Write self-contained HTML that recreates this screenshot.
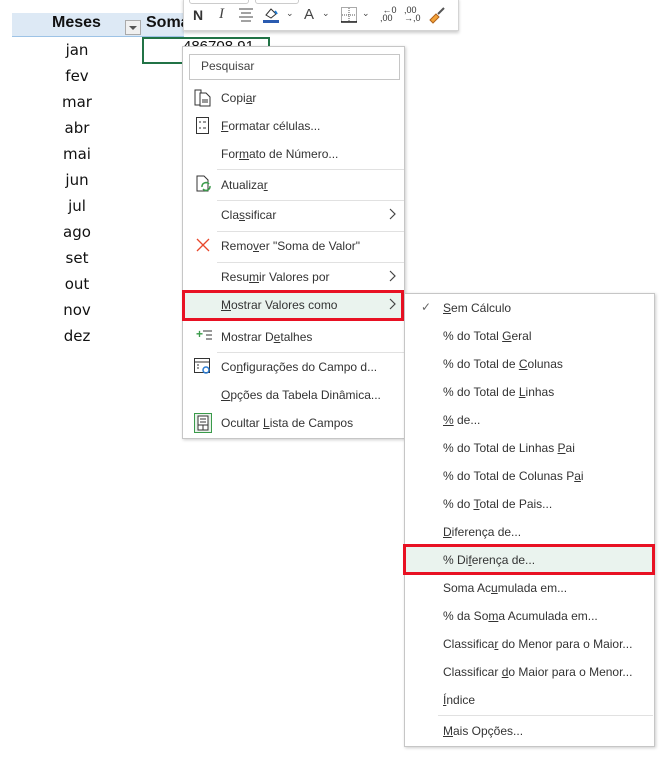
<!DOCTYPE html>
<html><head><meta charset="utf-8"><style>
*{margin:0;padding:0;box-sizing:border-box}
body{width:671px;height:767px;background:#fff;position:relative;overflow:hidden;font-family:"Liberation Sans",sans-serif}
.a{position:absolute}
.m{position:absolute;left:12px;width:130px;text-align:center;color:#111;font-family:"DejaVu Sans",sans-serif;font-size:15px}
.mi{position:absolute;font-size:12px;color:#333;white-space:nowrap;line-height:14px}
.sep{position:absolute;height:1px;background:#e1e1e1}
.chev{position:absolute}
u{text-decoration:underline}
</style></head><body>
<div class="a" style="left:12px;top:13px;width:172px;height:24px;background:#dde9f5;border-bottom:1px solid #9dc3e6"></div>
<div class="a" style="left:52px;top:14px;font-size:16px;font-weight:bold;color:#111">Meses</div>
<div class="a" style="left:125px;top:20px;width:16px;height:15px;border:1px solid #aaa;background:#f0f0f0"></div>
<div class="a" style="left:129px;top:26px;width:0;height:0;border-left:4px solid transparent;border-right:4px solid transparent;border-top:4px solid #555"></div>
<div class="a" style="left:146px;top:14px;font-size:16px;font-weight:bold;color:#111">Soma</div>
<div class="a" style="left:142px;top:37px;width:128px;height:27px;border:2px solid #217346"></div>
<div class="a" style="left:183px;top:38px;font-size:15px;color:#111">486708,91</div>
<div class="m" style="top:41px">jan</div>
<div class="m" style="top:67px">fev</div>
<div class="m" style="top:93px">mar</div>
<div class="m" style="top:119px">abr</div>
<div class="m" style="top:145px">mai</div>
<div class="m" style="top:171px">jun</div>
<div class="m" style="top:197px">jul</div>
<div class="m" style="top:223px">ago</div>
<div class="m" style="top:249px">set</div>
<div class="m" style="top:275px">out</div>
<div class="m" style="top:301px">nov</div>
<div class="m" style="top:327px">dez</div>
<div class="a" style="left:183px;top:-2px;width:276px;height:33px;background:#fff;border:1px solid #d4d4d4;box-shadow:0 2px 3px rgba(0,0,0,.2)"></div>
<div class="a" style="left:189px;top:-6px;width:60px;height:10px;border:1px solid #ccc;border-radius:3px"></div>
<div class="a" style="left:255px;top:-6px;width:44px;height:10px;border:1px solid #ccc;border-radius:3px"></div>
<div class="a" style="left:193px;top:7px;font-size:14px;font-weight:bold;color:#333">N</div>
<div class="a" style="left:219px;top:6px;font-size:15px;font-style:italic;font-family:'Liberation Serif',serif;color:#444">I</div>
<svg class="a" style="left:238px;top:8px" width="16" height="14"><path d="M1 1h14M3 5h10M1 9h14M3 13h10" stroke="#444" stroke-width="1"/></svg>
<svg class="a" style="left:262px;top:6px" width="18" height="18"><path d="M4 9l5-6 5 5-5 4z" fill="none" stroke="#333"/><path d="M13 5l2 3" stroke="#1e7ad0" stroke-width="2"/><rect x="1" y="14" width="16" height="3" fill="#2a5bb0"/></svg>
<div class="a" style="left:286px;top:8px;font-size:9px;color:#444">⌄</div>
<div class="a" style="left:304px;top:6px;font-size:15px;color:#444">A</div>
<div class="a" style="left:322px;top:8px;font-size:9px;color:#444">⌄</div>
<svg class="a" style="left:341px;top:7px" width="16" height="16"><rect x="0.5" y="0.5" width="15" height="14" fill="none" stroke="#555" stroke-dasharray="1 1"/><path d="M8 1v14M1 8h14" stroke="#555" stroke-dasharray="1 1"/><path d="M0 15h16" stroke="#222" stroke-width="1.5"/></svg>
<div class="a" style="left:362px;top:8px;font-size:9px;color:#444">⌄</div>
<div class="a" style="left:380px;top:6px;font-size:9px;line-height:8px;color:#333">&nbsp;←0<br>,00</div>
<div class="a" style="left:404px;top:6px;font-size:9px;line-height:8px;color:#333">,00<br>→,0</div>
<svg class="a" style="left:428px;top:6px" width="18" height="18"><path d="M2 14l6-6 3 3-6 6z" fill="#f3a33a" stroke="#b0621a"/><path d="M10 8l6-6" stroke="#555" stroke-width="2"/></svg>
<div class="a" style="left:182px;top:46px;width:223px;height:393px;background:#fff;border:1px solid #c6c6c6;box-shadow:1px 1px 3px rgba(0,0,0,.2)"></div>
<div class="a" style="left:189px;top:54px;width:211px;height:26px;border:1px solid #c6c6c6"></div>
<div class="mi" style="left:201px;top:59px;color:#444">Pesquisar</div>
<svg class="a" style="left:194px;top:89px" width="18" height="18"><path d="M1 1h6l0 15H1z" fill="none" stroke="#333"/><path d="M6 4h6l4 4v9H6z" fill="#fff" stroke="#333"/><path d="M8 11h6M8 13h6" stroke="#333"/></svg>
<div class="mi" style="left:221px;top:91px">Copi<u>a</u>r</div>
<svg class="a" style="left:196px;top:117px" width="14" height="18"><rect x="0.5" y="0.5" width="12" height="16" fill="none" stroke="#333"/><path d="M3 5h2M3 11h2M7 5h3M7 11h3" stroke="#333"/></svg>
<div class="mi" style="left:221px;top:119px"><u>F</u>ormatar células...</div>
<div class="mi" style="left:221px;top:147px">For<u>m</u>ato de Número...</div>
<div class="sep" style="left:217px;top:169px;width:187px"></div>
<svg class="a" style="left:196px;top:175px" width="16" height="18"><path d="M1 1h7l4 4v11H1z" fill="none" stroke="#333"/><path d="M6 12a4 4 0 0 1 7-3M14 11a4 4 0 0 1-7 3" fill="none" stroke="#3a9a4a" stroke-width="1.5"/></svg>
<div class="mi" style="left:221px;top:178px">Atualiza<u>r</u></div>
<div class="sep" style="left:217px;top:200px;width:187px"></div>
<div class="mi" style="left:221px;top:208px">Cla<u>s</u>sificar</div>
<svg class="chev" style="left:389px;top:208px" width="8" height="12"><path d="M1 1l5 5-5 5" fill="none" stroke="#444" stroke-width="1.2"/></svg>
<div class="sep" style="left:217px;top:231px;width:187px"></div>
<svg class="a" style="left:196px;top:238px" width="14" height="14"><path d="M1 1l12 12M13 1L1 13" stroke="#e8482c" stroke-width="1.3"/></svg>
<div class="mi" style="left:221px;top:239px">Remo<u>v</u>er "Soma de Valor"</div>
<div class="sep" style="left:217px;top:262px;width:187px"></div>
<div class="mi" style="left:221px;top:270px">Resu<u>m</u>ir Valores por</div>
<svg class="chev" style="left:389px;top:270px" width="8" height="12"><path d="M1 1l5 5-5 5" fill="none" stroke="#444" stroke-width="1.2"/></svg>
<div class="a" style="left:182px;top:290px;width:222px;height:31px;background:#eaf3ee;border:3px solid #e81123"></div>
<div class="mi" style="left:221px;top:298px"><u>M</u>ostrar Valores como</div>
<svg class="chev" style="left:389px;top:298px" width="8" height="12"><path d="M1 1l5 5-5 5" fill="none" stroke="#444" stroke-width="1.2"/></svg>
<div class="a" style="left:196px;top:327px;font-size:12px;color:#3a9a4a;font-weight:bold">+</div>
<svg class="a" style="left:203px;top:330px" width="10" height="12"><path d="M0 1h9M3 5h6M3 9h6" stroke="#333"/></svg>
<div class="mi" style="left:221px;top:330px">Mostrar D<u>e</u>talhes</div>
<div class="sep" style="left:217px;top:352px;width:187px"></div>
<svg class="a" style="left:194px;top:358px" width="18" height="18"><rect x="0.5" y="0.5" width="15" height="14" fill="none" stroke="#333"/><path d="M1 4h15M3 7h2M3 10h2" stroke="#333"/><circle cx="12" cy="12" r="3" fill="none" stroke="#2b7cd3" stroke-width="1.5"/></svg>
<div class="mi" style="left:221px;top:360px">Co<u>n</u>figurações do Campo d...</div>
<div class="mi" style="left:221px;top:388px"><u>O</u>pções da Tabela Dinâmica...</div>
<svg class="a" style="left:194px;top:413px" width="18" height="20"><rect x="0.5" y="0.5" width="17" height="19" fill="#e8f2ea" stroke="#3a9a4a"/><rect x="4" y="3" width="10" height="14" fill="#fff" stroke="#333"/><path d="M6 6h6M6 9h6M4 12h10M9 12v5" stroke="#333"/></svg>
<div class="mi" style="left:221px;top:416px">Ocultar <u>L</u>ista de Campos</div>
<div class="a" style="left:404px;top:293px;width:251px;height:454px;background:#fff;border:1px solid #c6c6c6;box-shadow:1px 1px 3px rgba(0,0,0,.2)"></div>
<div class="a" style="left:421px;top:300px;font-size:12px;color:#666">✓</div>
<div class="mi" style="left:443px;top:301px"><u>S</u>em Cálculo</div>
<div class="mi" style="left:443px;top:329px">% do Total <u>G</u>eral</div>
<div class="mi" style="left:443px;top:357px">% do Total de <u>C</u>olunas</div>
<div class="mi" style="left:443px;top:385px">% do Total de <u>L</u>inhas</div>
<div class="mi" style="left:443px;top:413px"><u>%</u> de...</div>
<div class="mi" style="left:443px;top:441px">% do Total de Linhas <u>P</u>ai</div>
<div class="mi" style="left:443px;top:469px">% do Total de Colunas P<u>a</u>i</div>
<div class="mi" style="left:443px;top:497px">% do <u>T</u>otal de Pais...</div>
<div class="mi" style="left:443px;top:525px"><u>D</u>iferença de...</div>
<div class="a" style="left:403px;top:544px;width:252px;height:31px;background:#eaf3ee;border:3px solid #e81123"></div>
<div class="mi" style="left:443px;top:553px">% Di<u>f</u>erença de...</div>
<div class="mi" style="left:443px;top:581px">Soma Ac<u>u</u>mulada em...</div>
<div class="mi" style="left:443px;top:609px">% da So<u>m</u>a Acumulada em...</div>
<div class="mi" style="left:443px;top:637px">Classifica<u>r</u> do Menor para o Maior...</div>
<div class="mi" style="left:443px;top:665px">Classificar <u>d</u>o Maior para o Menor...</div>
<div class="mi" style="left:443px;top:693px"><u>Í</u>ndice</div>
<div class="sep" style="left:438px;top:715px;width:215px"></div>
<div class="mi" style="left:443px;top:724px"><u>M</u>ais Opções...</div>
</body></html>
